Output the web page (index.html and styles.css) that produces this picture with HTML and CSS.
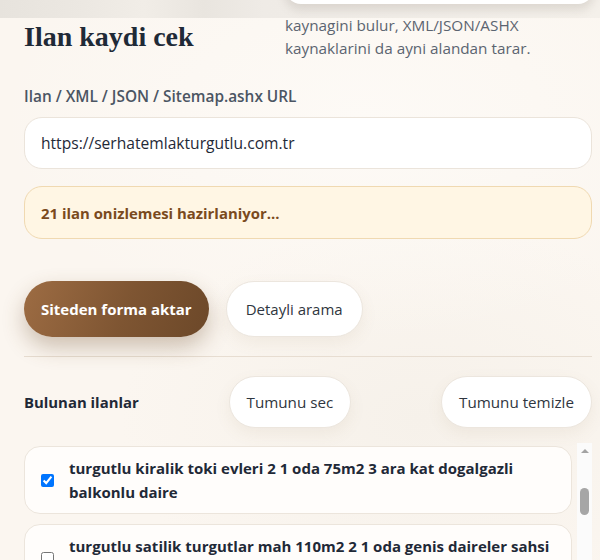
FILE: index.html
```html
<!DOCTYPE html>
<html lang="tr">
<head>
<meta charset="utf-8">
<title>Ilan kaydi cek</title>
<link rel="stylesheet" href="styles.css">
</head>
<body>
<div class="topbar"><div class="topcard"></div></div>
<main class="panel">
  <header class="head">
    <h2 class="title">Ilan kaydi cek</h2>
    <p class="desc">kaynagini bulur, XML/JSON/ASHX kaynaklarini da ayni alandan tarar.</p>
  </header>
  <label class="label" for="url">Ilan / XML / JSON / Sitemap.ashx URL</label>
  <input class="input" id="url" type="text" value="https://serhatemlakturgutlu.com.tr">
  <div class="alert">21 ilan onizlemesi hazirlaniyor...</div>
  <div class="actions">
    <button class="btn btn-primary">Siteden forma aktar</button>
    <button class="btn">Detayli arama</button>
  </div>
  <hr class="divider">
  <div class="listhead">
    <strong class="listtitle">Bulunan ilanlar</strong>
    <button class="btn btn-sm">Tumunu sec</button>
    <button class="btn btn-sm">Tumunu temizle</button>
  </div>
  <div class="listwrap">
    <div class="list">
      <label class="item"><input type="checkbox" checked><span>turgutlu kiralik toki evleri 2 1 oda 75m2 3 ara kat dogalgazli balkonlu daire</span></label>
      <label class="item"><input type="checkbox"><span>turgutlu satilik turgutlar mah 110m2 2 1 oda genis daireler sahsi sahibinden</span></label>
      <label class="item"><input type="checkbox"><span>turgutlu satilik yedi eylul mah 3 1 oda 130m2 dogalgazli asansorlu daire</span></label>
    </div>
    <div class="scrollbar" aria-hidden="true">
      <span class="arrow"></span>
      <span class="thumb"></span>
    </div>
  </div>
</main>
</body>
</html>
```
FILE: styles.css
```css
* { box-sizing: border-box; }
html, body { margin: 0; }
body {
  width: 600px;
  height: 560px;
  overflow: hidden;
  font-family: "Open Sans", "Noto Sans", sans-serif;
  color: #1f2937;
  background:
    radial-gradient(ellipse 360px 220px at 360px 120px, #fdfaf6 0%, rgba(253,250,246,0) 100%),
    radial-gradient(ellipse 300px 200px at 420px 420px, #f6f1ea 0%, rgba(246,241,234,0) 100%),
    #fbf6f0;
}
.topbar {
  position: fixed;
  top: 0; left: 0; right: 0;
  height: 18px;
  background: linear-gradient(to right, #e7e3dd 0%, #ece8e2 14%, #f1ede7 24%, #e9e5df 34%, #efebe6 44%, #f4f0ea 100%);
  z-index: 2;
}
.topcard {
  position: absolute;
  left: 285px;
  width: 309px;
  top: -30px;
  height: 34px;
  background: #fff;
  border-radius: 0 0 16px 16px;
  box-shadow: 0 6px 10px rgba(120, 110, 100, 0.18);
}
.panel {
  padding: 14px 8px 0 24px;
}
.head {
  display: flex;
  align-items: center;
  justify-content: space-between;
  height: 46px;
}
.title {
  margin: 0;
  font-family: "Liberation Serif", "DejaVu Serif", serif;
  font-weight: 700;
  font-size: 28px;
  line-height: 32px;
  color: #1f2a37;
}
.desc {
  margin: 0;
  width: 307px;
  font-size: 15.3px;
  line-height: 23px;
  color: #5b6470;
}
.label {
  display: block;
  margin-top: 27px;
  font-size: 15.4px;
  line-height: 20px;
  font-weight: 600;
  color: #4b5563;
}
.input {
  display: block;
  width: 100%;
  height: 52px;
  margin-top: 10px;
  padding: 0 16px;
  border: 1px solid #ebe4db;
  border-radius: 18px;
  background: #fff;
  font-family: inherit;
  font-size: 15.6px;
  color: #1f2937;
  outline: none;
}
.alert {
  display: flex;
  align-items: center;
  height: 53px;
  margin-top: 17px;
  padding: 0 16px;
  border: 1px solid #f0d9b1;
  border-radius: 18px;
  background: #fff6e4;
  color: #7a4a1d;
  font-weight: 700;
  font-size: 14.9px;
}
.actions {
  display: flex;
  gap: 17px;
  margin-top: 42px;
}
.btn {
  height: 56px;
  padding: 0 19px;
  border: 1px solid #ece6de;
  border-radius: 999px;
  background: #fff;
  font-family: inherit;
  font-size: 15px;
  color: #2f3640;
  box-shadow: 0 6px 16px rgba(140, 110, 80, 0.08);
}
.btn-primary {
  padding: 0 17px;
  border: 0;
  color: #fff;
  font-weight: 700;
  font-size: 15px;
  background: linear-gradient(110deg, #9d6c43 0%, #7e5532 55%, #6c4829 100%);
  box-shadow: 0 10px 22px rgba(110, 75, 40, 0.32);
}
.divider {
  margin: 19px 0 0;
  border: 0;
  border-top: 1px solid #e7ddd1;
}
.listhead {
  display: flex;
  align-items: center;
  justify-content: space-between;
  margin-top: 19px;
}
.listtitle {
  font-size: 14.9px;
  font-weight: 700;
  color: #1f2937;
}
.btn-sm {
  height: 52px;
  padding: 0 17px;
  font-size: 15.2px;
}
.listwrap {
  display: flex;
  gap: 5px;
  height: 400px;
  margin-top: 15px;
}
.list {
  flex: 1;
  display: flex;
  flex-direction: column;
  gap: 10px;
  padding-top: 3px;
  overflow: hidden;
}
.item {
  display: flex;
  align-items: center;
  gap: 15px;
  flex: none;
  padding: 9px 16px;
  border: 1px solid #ece5dc;
  border-radius: 16px;
  background: #fffdfb;
  font-weight: 700;
  font-size: 15px;
  line-height: 24px;
  color: #1f2937;
}
.item input {
  flex: none;
  width: 13px;
  height: 13px;
  margin: 0;
}
.scrollbar {
  flex: none;
  width: 15px;
  display: flex;
  flex-direction: column;
  align-items: center;
  padding-top: 6px;
  background: #fbfbfb;
}
.arrow {
  width: 0;
  height: 0;
  border-left: 4px solid transparent;
  border-right: 4px solid transparent;
  border-bottom: 4px solid #a3a3a3;
}
.thumb {
  width: 9px;
  height: 27px;
  margin-top: 35px;
  border-radius: 5px;
  background: #a6a6a6;
}
```
